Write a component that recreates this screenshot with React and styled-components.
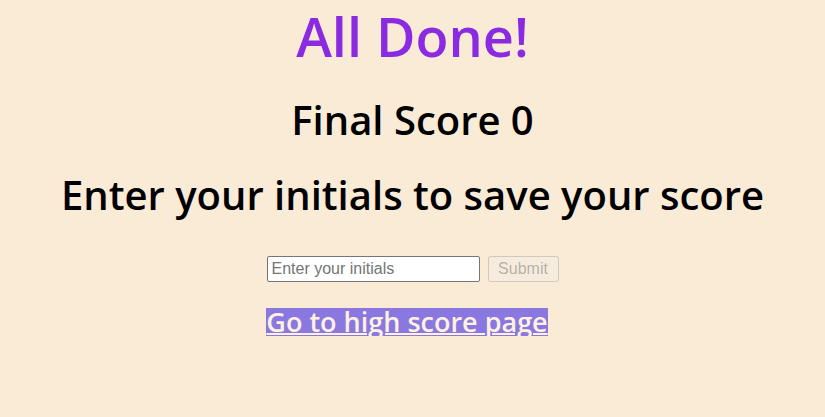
import React from 'react';
import styled, { createGlobalStyle } from 'styled-components';

const GlobalStyle = createGlobalStyle`
  body {
    margin: 0;
    background-color: antiquewhite;
    font-family: "Open Sans", "DejaVu Sans", sans-serif;
  }
`;

const Page = styled.main`
  display: flex;
  flex-direction: column;
  align-items: center;
  text-align: center;
`;

const Title = styled.h1`
  margin: 2px 0 0;
  font-size: 54px;
  line-height: 68px;
  font-weight: 600;
  color: blueviolet;
`;

const Heading = styled.h2`
  margin: ${props => props.$top}px 0 0;
  font-size: 40px;
  font-weight: 600;
  line-height: 52px;
  color: #000;
`;

const Form = styled.form`
  display: flex;
  gap: 8px;
  margin-top: 35px;
`;

const Input = styled.input`
  width: 213px;
  height: 26px;
  box-sizing: border-box;
  padding: 1px 4px;
  border: 1px solid #767676;
  border-radius: 2px;
  font-family: "Liberation Sans", Arial, sans-serif;
  font-size: 16px;
  color: #000;
  &::placeholder {
    color: #757575;
  }
`;

const Button = styled.button`
  height: 26px;
  width: 71px;
  box-sizing: border-box;
  border: 1px solid rgba(118, 118, 118, 0.3);
  border-radius: 3px;
  background: rgba(239, 239, 239, 0.3);
  color: rgba(16, 16, 16, 0.3);
  font-family: "Liberation Sans", Arial, sans-serif;
  font-size: 16px;
`;

const Link = styled.a`
  margin: 26px 11px 0 0;
  background-color: #8a78e0;
  color: #fdf1e0;
  font-size: 27px;
  font-weight: 600;
  line-height: 28px;
  text-decoration: underline;
  text-decoration-thickness: 2px;
  text-underline-offset: 1px;
`;

export default function App() {
  return (
    <>
      <GlobalStyle />
      <Page>
        <Title>All Done!</Title>
        <Heading $top={24}>Final Score 0</Heading>
        <Heading $top={23}>Enter your initials to save your score</Heading>
        <Form onSubmit={e => e.preventDefault()}>
          <Input placeholder="Enter your initials" />
          <Button type="submit" disabled>Submit</Button>
        </Form>
        <Link href="#">Go to high score page</Link>
      </Page>
    </>
  );
}
